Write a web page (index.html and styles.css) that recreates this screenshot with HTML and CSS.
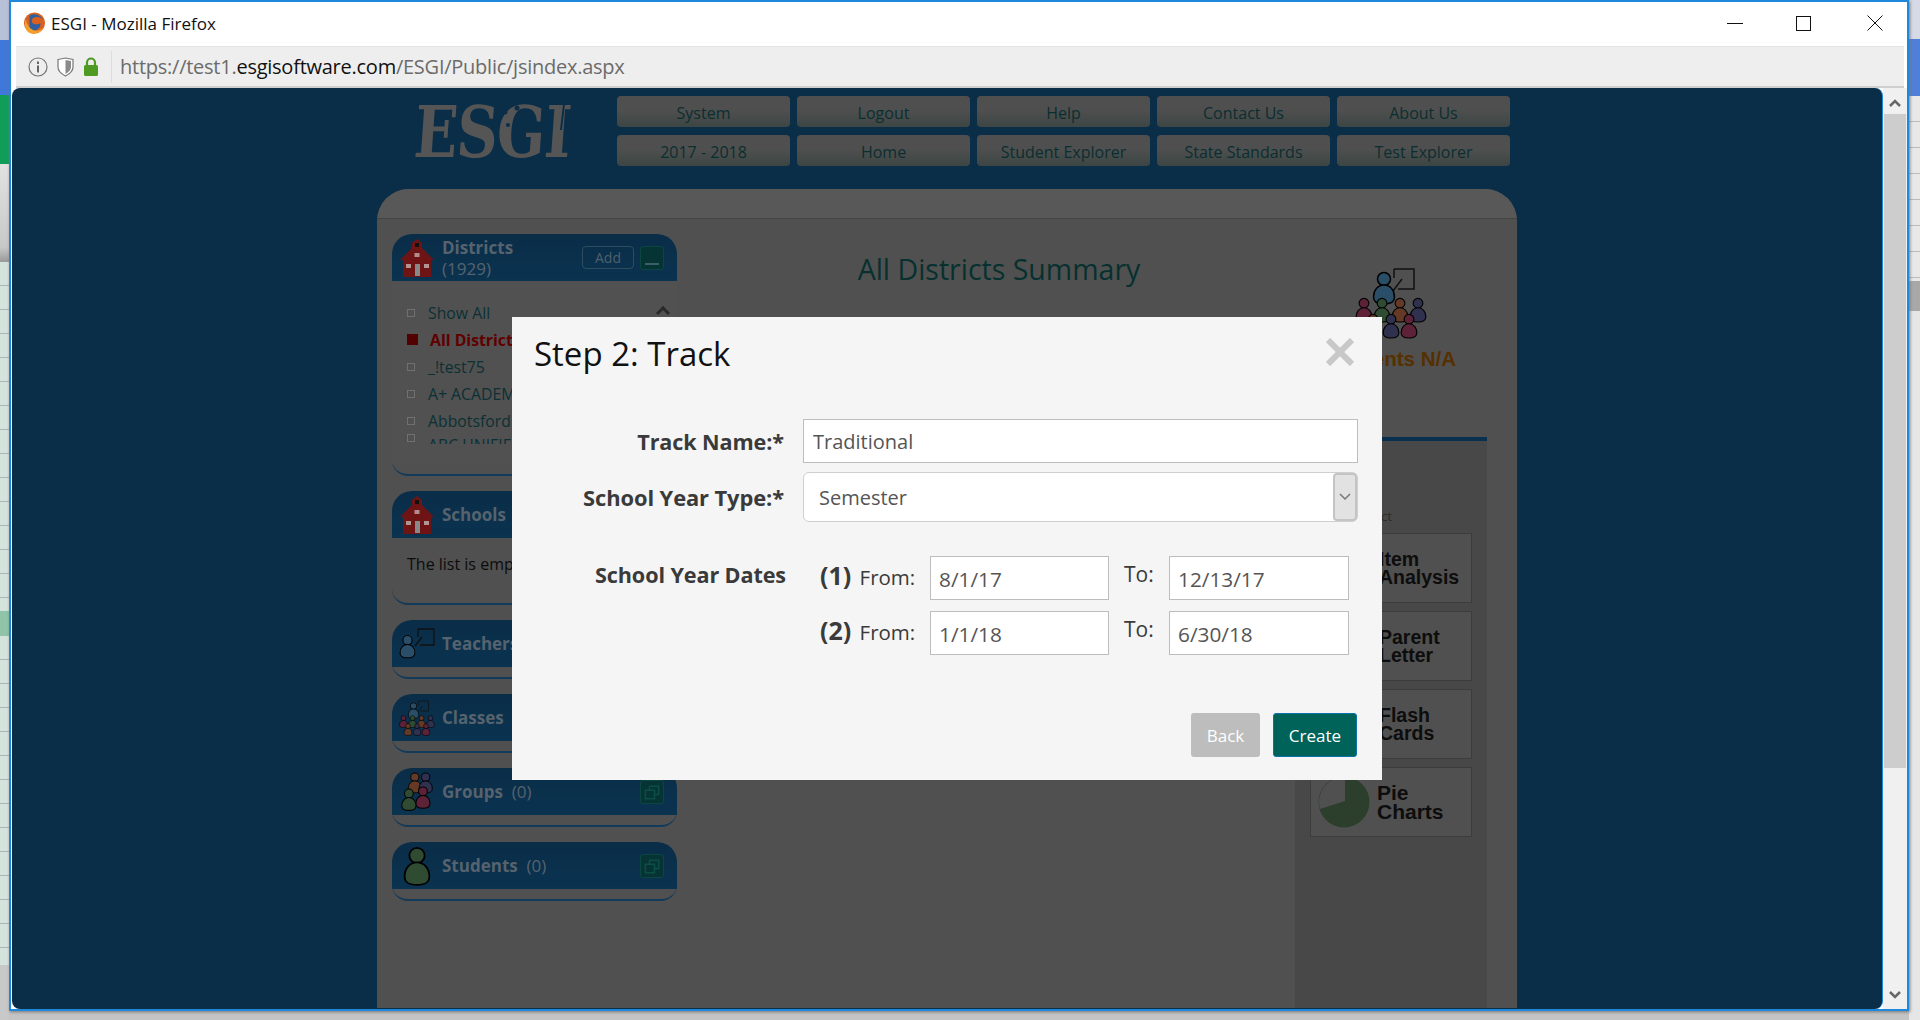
FILE: index.html
```html
<!DOCTYPE html>
<html lang="en">
<head>
    <meta charset="UTF-8">
    <title>ESGI - Mozilla Firefox</title>
    <link rel="stylesheet" href="styles.css">
</head>
<body>

<svg class="defs" width="0" height="0">
    <symbol id="school" viewBox="0 0 36 38">
        <path d="M18 0l5 4v5l12 12h-3v17H4V21H1L13 9V4z" fill="#6f1414"/>
        <rect x="16" y="4" width="4" height="4" fill="#111"/>
        <rect x="15.500" y="14" width="5" height="4" fill="#ddd" opacity=".6"/>
        <rect x="16" y="25" width="5" height="12" fill="#888"/>
        <rect x="7" y="25" width="5" height="4" fill="#ccc" opacity=".7"/>
        <rect x="25" y="25" width="5" height="4" fill="#ccc" opacity=".7"/>
    </symbol>
    <symbol id="person" viewBox="0 0 24 34">
        <circle cx="12" cy="8" r="6.500" stroke="#000" stroke-width="1.500"/>
        <path d="M12 14c6 0 10.500 5 10.500 12 0 5-3 7-10.500 7S1.500 31 1.500 26C1.500 19 6 14 12 14z" stroke="#000" stroke-width="1.500"/>
    </symbol>
    <symbol id="teacher" viewBox="0 0 36 32">
        <use href="#person" x="0" y="6" width="17" height="25" fill="#2a4d68"/>
        <path d="M19 1h16v16H21M23 9l-7 9" fill="none" stroke="#111" stroke-width="1.300"/>
        <path d="M19 1v8" fill="none" stroke="#111" stroke-width="1.300"/>
    </symbol>
    <symbol id="class" viewBox="0 0 72 72">
        <path d="M39 2h20v20H43M47 12l-9 12" fill="none" stroke="#111" stroke-width="1.500"/>
        <path d="M39 2v9" fill="none" stroke="#111" stroke-width="1.500"/>
        <use href="#person" x="17" y="4" width="24" height="34" fill="#2a4d68"/>
        <use href="#person" x="0" y="30" width="18" height="26" fill="#5e2238"/>
        <use href="#person" x="18" y="30" width="18" height="26" fill="#2f4c33"/>
        <use href="#person" x="36" y="30" width="18" height="26" fill="#643a26"/>
        <use href="#person" x="54" y="30" width="18" height="26" fill="#30304f"/>
        <use href="#person" x="9" y="46" width="18" height="26" fill="#643a26"/>
        <use href="#person" x="27" y="46" width="18" height="26" fill="#30304f"/>
        <use href="#person" x="45" y="46" width="18" height="26" fill="#5e2238"/>
    </symbol>
    <symbol id="group" viewBox="0 0 32 37">
        <use href="#person" x="7" y="0" width="14" height="20" fill="#643a26"/>
        <use href="#person" x="17" y="0" width="14" height="20" fill="#30304f"/>
        <use href="#person" x="14" y="12" width="15" height="23" fill="#5e2238"/>
        <use href="#person" x="1" y="14" width="15" height="23" fill="#2f4c33"/>
    </symbol>
    <symbol id="copy" viewBox="0 0 24 24">
        <path d="M9 5h11v10h-5M4 10h11v10H4zM9 10V5" fill="none" stroke="#0c4d48" stroke-width="1.800"/>
    </symbol>
</svg>

<div class="desktop-left">
    <div class="dl-top"></div>
    <div class="dl-blue"></div>
    <div class="dl-green"></div>
    <div class="dl-gray"></div>
    <div class="dl-rows dl-rows-a"></div>
    <div class="dl-mark"></div>
    <div class="dl-rows dl-rows-b"></div>
</div>
<div class="desktop-right">
    <div class="dr-top"></div>
    <div class="dr-blue"></div>
    <div class="dr-lines"></div>
    <div class="dr-mark"></div>
</div>

<div class="window">
    <div class="titlebar">
        <svg class="ff-logo" viewBox="0 0 24 24" width="23" height="24">
            <circle cx="12" cy="12" r="11" fill="#d9601f"/>
            <path d="M7 4a10 10 0 0 1 14 5c-2-3-5-4-8-3-3 0-5 3-3 6 2 2 6 2 8 0 1 4-3 8-7 8-2 0-4-1-5-2 2 0 0-10 1-14z" fill="#2f5f9e"/>
            <path d="M3 8c-2 5-1 11 3 14 5 3 13 1 16-6-3 4-8 5-12 3-4-2-6-6-7-11z" fill="#f3a02a"/>
        </svg>
        <span class="win-title">ESGI - Mozilla Firefox</span>
        <div class="win-controls">
            <span class="ctl-min"></span>
            <span class="ctl-max"></span>
            <svg class="ctl-close" viewBox="0 0 16 16" width="16" height="16"><path d="M.5.5l15 15M15.500.5l-15 15" stroke="#111" stroke-width="1"/></svg>
        </div>
    </div>
    <div class="urlbar">
        <svg class="url-ic" viewBox="0 0 20 20" width="20" height="20"><circle cx="10" cy="10" r="9" fill="none" stroke="#777" stroke-width="1.200"/><rect x="9" y="8.500" width="2" height="7" fill="#666"/><rect x="9" y="4.500" width="2" height="2.500" fill="#666"/></svg>
        <svg class="url-ic" viewBox="0 0 19 20" width="19" height="20"><path d="M2 2.500L9.500 1 17 2.500V10c0 4-3.500 7-7.500 9C5.500 17 2 14 2 10z" fill="#fff" stroke="#777" stroke-width="1.200"/><path d="M9.500 3l5.500 1v6c0 3-2.500 5-5.500 7z" fill="#8a8a8a"/></svg>
        <svg class="url-ic" viewBox="0 0 16 19" width="16" height="19"><path d="M4 8V5.500a4 4 0 0 1 8 0V8" fill="none" stroke="#4f9a22" stroke-width="2.200"/><rect x="1" y="8" width="14" height="11" rx="1.500" fill="#4f9a22"/></svg>
        <span class="url-text">https://test1.<b>esgisoftware.com</b>/ESGI/Public/jsindex.aspx</span>
    </div>

    <div class="content">
        <div class="viewport">
            <div class="site">
                <div class="site-head">
                    <div class="logo-wrap">
                        <div class="logo">ESGI</div>
                        <svg class="logo-marks" viewBox="0 0 240 60" width="240" height="60">
                            <circle cx="128" cy="16" r="2.500" fill="#0a2d48"/>
                            <circle cx="140" cy="12" r="2.500" fill="#0a2d48"/>
                            <circle cx="131" cy="29" r="2" fill="#0a2d48"/>
                            <path d="M187 8l-3 26" stroke="#0a2d48" stroke-width="2"/>
                        </svg>
                    </div>
                    <div class="nav">
                        <a class="nav-btn">System</a>
                        <a class="nav-btn">Logout</a>
                        <a class="nav-btn">Help</a>
                        <a class="nav-btn">Contact Us</a>
                        <a class="nav-btn">About Us</a>
                        <a class="nav-btn">2017 - 2018</a>
                        <a class="nav-btn">Home</a>
                        <a class="nav-btn">Student Explorer</a>
                        <a class="nav-btn">State Standards</a>
                        <a class="nav-btn">Test Explorer</a>
                    </div>
                </div>

                <div class="panel">
                    <div class="panel-top"></div>
                    <div class="panel-body">
                        <div class="sidebar">
                            <div class="box">
                                <div class="box-head">
                                    <svg class="box-ic"><use href="#school"/></svg>
                                    <div class="box-title"><b>Districts</b><br>(1929)</div>
                                    <span class="add-btn">Add</span>
                                    <span class="tool-btn"><i class="dash"></i></span>
                                </div>
                                <div class="box-list">
                                    <span class="scroll-up"></span>
                                    <div class="li"><i></i>Show All</div>
                                    <div class="li active"><i></i>All Districts</div>
                                    <div class="li"><i></i>_!test75</div>
                                    <div class="li"><i></i>A+ ACADEMY</div>
                                    <div class="li"><i></i>Abbotsford</div>
                                    <div class="li li-cut"><i></i>ABC UNIFIED</div>
                                </div>
                            </div>
                            <div class="box">
                                <div class="box-head">
                                    <svg class="box-ic"><use href="#school"/></svg>
                                    <div class="box-title"><b>Schools</b></div>
                                </div>
                                <div class="box-empty">The list is empty</div>
                            </div>
                            <div class="box">
                                <div class="box-head">
                                    <svg class="box-ic"><use href="#teacher"/></svg>
                                    <div class="box-title"><b>Teachers</b></div>
                                </div>
                            </div>
                            <div class="box">
                                <div class="box-head">
                                    <svg class="box-ic"><use href="#class"/></svg>
                                    <div class="box-title"><b>Classes</b></div>
                                </div>
                            </div>
                            <div class="box">
                                <div class="box-head">
                                    <svg class="box-ic"><use href="#group"/></svg>
                                    <div class="box-title"><b>Groups</b>&nbsp; (0)</div>
                                    <span class="tool-btn"><svg width="20" height="20"><use href="#copy"/></svg></span>
                                </div>
                            </div>
                            <div class="box">
                                <div class="box-head">
                                    <svg class="box-ic"><use href="#person" fill="#2f4c33"/></svg>
                                    <div class="box-title"><b>Students</b>&nbsp; (0)</div>
                                    <span class="tool-btn"><svg width="20" height="20"><use href="#copy"/></svg></span>
                                </div>
                            </div>
                        </div>

                        <div class="summary">
                            <h2 class="summary-title">All Districts Summary</h2>
                            <div class="stat">
                                <svg class="stat-ic"><use href="#class"/></svg>
                                <div class="stat-text">Students N/A</div>
                            </div>
                            <div class="reports">
                                <div class="reports-note">Select</div>
                                <div class="card"><span>Item<br>Analysis</span></div>
                                <div class="card"><span>Parent<br>Letter</span></div>
                                <div class="card"><span>Flash<br>Cards</span></div>
                                <div class="card card-pie">
                                    <svg viewBox="0 0 52 52" width="52" height="52">
                                        <circle cx="26" cy="26" r="25.500" fill="#2c3f2c"/>
                                        <path d="M27 1v24L2 33A25 25 0 0 1 27 1z" fill="#505050"/>
                                    </svg>
                                    <span>Pie<br>Charts</span>
                                </div>
                            </div>
                        </div>
                    </div>
                </div>
            </div>

            <div class="modal">
                <div class="modal-head">
                    <h3 class="modal-title">Step 2: Track</h3>
                    <svg class="modal-close" viewBox="0 0 28 28" width="28" height="28"><path d="M2 2l24 24M26 2L2 26" stroke="#c8c8c8" stroke-width="6"/></svg>
                </div>
                <div class="form-row">
                    <label class="form-label">Track Name:*</label>
                    <input class="text-input" type="text" value="Traditional">
                </div>
                <div class="form-row form-row-select">
                    <label class="form-label">School Year Type:*</label>
                    <div class="select">
                        <span>Semester</span>
                        <span class="select-arrow">
                            <svg viewBox="0 0 12 8" width="12" height="8"><path d="M1 1l5 5 5-5" fill="none" stroke="#777" stroke-width="1.500"/></svg>
                        </span>
                    </div>
                </div>
                <div class="dates">
                    <div class="form-label dates-label">School Year Dates</div>
                    <div class="dates-grid">
                        <div class="dates-n"><b>(1)</b> From:</div>
                        <input class="date-input" type="text" value="8/1/17">
                        <div class="dates-to">To:</div>
                        <input class="date-input" type="text" value="12/13/17">
                        <div class="dates-n"><b>(2)</b> From:</div>
                        <input class="date-input" type="text" value="1/1/18">
                        <div class="dates-to">To:</div>
                        <input class="date-input" type="text" value="6/30/18">
                    </div>
                </div>
                <div class="modal-foot">
                    <button class="btn btn-back">Back</button>
                    <button class="btn btn-create">Create</button>
                </div>
            </div>
        </div>

        <div class="scrollbar">
            <svg viewBox="0 0 12 8" width="12" height="8"><path d="M1 7l5-5 5 5" fill="none" stroke="#666" stroke-width="2.500"/></svg>
            <div class="scroll-thumb"></div>
            <div class="scroll-rest"></div>
            <svg viewBox="0 0 12 8" width="12" height="8"><path d="M1 1l5 5 5-5" fill="none" stroke="#666" stroke-width="2.500"/></svg>
        </div>
    </div>
</div>

</body>
</html>
```

FILE: styles.css
```css
html, body {
    margin: 0;
    height: 100%;
    overflow: hidden;
}
body {
    background-color: #c4c4c4;
    font-family: "Open Sans", "Noto Sans", sans-serif;
}
.defs {
    position: absolute;
}

/* desktop showing behind the firefox window */
.desktop-left {
    position: absolute;
    left: 0;
    top: 0;
    width: 9px;
    height: 1020px;
    display: flex;
    flex-direction: column;
    background-color: #c8c8c8;
}
.dl-top {
    height: 40px;
    background-color: #b8c0d8;
}
.dl-blue {
    height: 55px;
    background-color: #3f78d8;
}
.dl-green {
    height: 69px;
    background-color: #0f9d58;
}
.dl-gray {
    height: 98px;
    background: linear-gradient(#e2e2e2, #c8c8c8 85%, #999);
}
.dl-rows {
    background: repeating-linear-gradient(#d5e3dd 0, #d5e3dd 23px, #a9b5b0 23px, #a9b5b0 24px);
}
.dl-rows-a {
    height: 349px;
}
.dl-mark {
    height: 25px;
    background-color: #8fc4a8;
}
.dl-rows-b {
    height: 329px;
}
.desktop-right {
    position: absolute;
    right: 0;
    top: 0;
    width: 11px;
    height: 1020px;
    background-color: #e6e6e6;
}
.dr-top {
    height: 39px;
    background-color: #d6d9e6;
}
.dr-blue {
    height: 57px;
    background-color: #4f7fd8;
}
.dr-lines {
    height: 185px;
    background: repeating-linear-gradient(#e8e8e8 0, #e8e8e8 25px, #bbb 25px, #bbb 26px);
}
.dr-mark {
    height: 30px;
    background-color: #a8a8a8;
}

.window {
    position: absolute;
    left: 9px;
    top: 0;
    width: 1900px;
    height: 1011px;
    background-color: #fff;
    border: 2px solid #1e88dc;
    box-sizing: border-box;
    display: flex;
    flex-direction: column;
    box-shadow: 1px 1px 3px #777;
}
.titlebar {
    height: 44px;
    display: flex;
    align-items: center;
    padding: 0 0 2px 12px;
    box-sizing: border-box;
    flex-shrink: 0;
}
.ff-logo {
    margin-right: 5px;
}
.win-title {
    font-size: 17px;
    color: #111;
}
.win-controls {
    margin-left: auto;
    display: flex;
    align-items: center;
    gap: 53px;
    padding-right: 24px;
}
.ctl-min {
    width: 16px;
    height: 1px;
    background-color: #111;
}
.ctl-max {
    width: 13px;
    height: 13px;
    border: 1px solid #111;
}
.ctl-close {
    margin-left: 3px;
}
.urlbar {
    height: 42px;
    margin: 0 3px 0 5px;
    background-color: #eeeeee;
    border-top: 1px solid #e4e4e4;
    border-bottom: 2px solid #cfcfcf;
    box-sizing: border-box;
    display: flex;
    align-items: center;
    gap: 8px;
    padding-left: 12px;
    flex-shrink: 0;
}
.url-text {
    margin-left: 4px;
    padding-left: 8px;
    border-left: 1px solid #ddd;
    font-size: 20px;
    line-height: 32px;
    color: #6b6b6b;
    letter-spacing: -.25px;
}
.url-text b {
    font-weight: 400;
    color: #111;
}

.content {
    flex: 1;
    display: flex;
    min-height: 0;
    padding-left: 1px;
}
.viewport {
    flex: 1;
    position: relative;
    overflow: hidden;
    background-color: #0a2d48;
    border-radius: 8px;
    border-right: 1px solid #1e88dc;
}
.scrollbar {
    width: 24px;
    background-color: #f0f0f0;
    display: flex;
    flex-direction: column;
    align-items: center;
    padding-top: 11px;
    padding-bottom: 10px;
    box-sizing: border-box;
}
.scroll-thumb {
    width: 22px;
    height: 654px;
    margin-top: 7px;
    background-color: #cdcdcd;
}
.scroll-rest {
    flex: 1;
}

.site {
    width: 1140px;
    margin: 0 auto;
}
.site-head {
    height: 101px;
    display: flex;
    padding-top: 8px;
    box-sizing: border-box;
}
.logo-wrap {
    position: relative;
    width: 240px;
}
.logo {
    padding-left: 40px;
    font-family: "DejaVu Serif", serif;
    font-weight: 700;
    font-size: 57px;
    line-height: 57px;
    letter-spacing: -1px;
    color: #555;
    transform: skewX(-4deg) scaleY(1.25);
    transform-origin: 0 0;
}
.logo-marks {
    position: absolute;
    left: 0;
    top: 0;
}
.nav {
    display: grid;
    grid-template-columns: repeat(5, 173px);
    grid-auto-rows: 31px;
    gap: 8px 7px;
}
.nav-btn {
    display: block;
    border-radius: 4px;
    background: linear-gradient(#4f4f4f 45%, #3c4644);
    color: #0b2e30;
    font-size: 16px;
    line-height: 34px;
    text-align: center;
}

.panel {
    height: 819px;
    overflow: hidden;
    background-color: #505050;
    border-radius: 32px 32px 0 0;
}
.panel-top {
    height: 29px;
    background-color: #585858;
    border-bottom: 1px solid #444;
    border-radius: 32px 32px 0 0;
}
.panel-body {
    display: flex;
    padding: 15px 0 0 15px;
}

.sidebar {
    width: 285px;
    display: flex;
    flex-direction: column;
    gap: 15px;
}
.box {
    background-color: #505050;
    border-bottom: 2px solid #123a5a;
    border-radius: 22px 22px 16px 16px;
    padding-bottom: 10px;
}
.box-head {
    height: 47px;
    display: flex;
    align-items: center;
    padding: 0 13px 0 7px;
    background: linear-gradient(#0a2d48, #0a3350);
    border-radius: 20px 20px 0 0;
    color: #56636e;
}
.box-ic {
    width: 36px;
    height: 40px;
    margin-right: 7px;
    flex-shrink: 0;
}
.box-title {
    font-size: 17px;
    line-height: 21px;
    flex: 1;
}
.add-btn {
    width: 50px;
    height: 21px;
    margin-right: 6px;
    border: 1px solid #2f4c5c;
    border-radius: 4px;
    font-size: 14px;
    line-height: 21px;
    text-align: center;
    color: #4f5f6c;
}
.tool-btn {
    width: 24px;
    height: 24px;
    display: flex;
    align-items: center;
    justify-content: center;
    background-color: #063434;
    border: 1px solid #0c4642;
    border-radius: 3px;
    box-sizing: border-box;
}
.dash {
    width: 14px;
    height: 2px;
    margin-top: 12px;
    background-color: #3a5f68;
}
.box-list {
    position: relative;
    height: 183px;
    padding-top: 18px;
    box-sizing: border-box;
    background-color: #515151;
}
.scroll-up {
    position: absolute;
    right: 9px;
    top: 27px;
    width: 7px;
    height: 7px;
    border-left: 3px solid #2a2a2a;
    border-top: 3px solid #2a2a2a;
    transform: rotate(45deg);
}
.li {
    height: 27px;
    display: flex;
    align-items: center;
    padding-left: 15px;
    font-size: 15.800px;
    color: #0c3034;
}
.li-cut {
    height: 10px;
    overflow: hidden;
    align-items: flex-start;
}
.li i {
    width: 6px;
    height: 6px;
    margin-right: 13px;
    border: 1px solid #707070;
}
.li.active {
    font-weight: 700;
    color: #600000;
}
.li.active i {
    width: 11px;
    height: 11px;
    margin-right: 12px;
    border: none;
    background-color: #520000;
}
.box-empty {
    height: 55px;
    padding: 15px 15px 0;
    box-sizing: border-box;
    font-size: 16px;
    color: #0c0c0c;
}

.summary {
    position: relative;
    flex: 1;
}
.summary-title {
    margin: 16px 0 0;
    width: 644px;
    text-align: center;
    font-size: 28.500px;
    font-weight: 400;
    color: #07302f;
}
.stat {
    position: absolute;
    right: 61px;
    top: 33px;
    text-align: center;
}
.stat-ic {
    display: block;
    width: 72px;
    height: 72px;
    margin: 0 auto 8px auto;
    transform: translateX(-1px);
}
.stat-text {
    font-family: "Liberation Sans", sans-serif;
    font-size: 20.500px;
    font-weight: 700;
    color: #563000;
}
.reports {
    position: absolute;
    left: 618px;
    top: 203px;
    width: 192px;
    height: 620px;
    background-color: #484848;
    border-top: 4px solid #0a3050;
    box-sizing: border-box;
    padding: 0 15px;
}
.reports-note {
    height: 92px;
    padding: 66px 0 0 46px;
    box-sizing: border-box;
    font-size: 13px;
    color: #2c2c2c;
}
.card {
    height: 70px;
    margin-bottom: 8px;
    width: 162px;
    border: 1px solid #3b3b40;
    background-color: #505050;
    box-sizing: border-box;
    display: flex;
    align-items: center;
    padding-left: 68px;
    font-family: "Liberation Sans", sans-serif;
    font-size: 19.500px;
    line-height: 18px;
    font-weight: 700;
    color: #0d0d0d;
}
.card-pie {
    padding-left: 7px;
    gap: 7px;
    font-size: 21px;
    line-height: 19px;
}

/* Step 2 dialog sits over the dimmed page */
.modal {
    position: absolute;
    left: 500px;
    top: 229px;
    width: 870px;
    height: 463px;
    background-color: #f5f5f5;
    padding: 0 24px 0 22px;
    box-sizing: border-box;
    font-size: 20px;
    color: #3a3a3a;
}
.modal-head {
    height: 102px;
    display: flex;
    justify-content: space-between;
    align-items: flex-start;
}
.modal-title {
    margin: 15px 0 0;
    font-size: 33px;
    line-height: 44px;
    font-weight: 400;
    color: #111;
}
.modal-close {
    margin: 21px 4px 0 0;
}
.form-row {
    display: flex;
    align-items: center;
    gap: 19px;
}
.form-row-select {
    margin-top: 9px;
}
.form-label {
    width: 250px;
    text-align: right;
    font-weight: 700;
    font-size: 21.600px;
    letter-spacing: -.1px;
    white-space: nowrap;
    flex-shrink: 0;
    color: #3a3a3a;
}
.form-row-select .form-label {
    font-size: 21.900px;
}
.text-input {
    width: 556px;
    height: 44px;
    padding: 0 9px;
    border: 1px solid #bdbdbd;
    box-sizing: border-box;
    font-family: inherit;
    font-size: 20px;
    color: #555;
    background-color: #fff;
}
.select {
    width: 556px;
    height: 50px;
    display: flex;
    align-items: center;
    justify-content: space-between;
    padding-left: 15px;
    border: 1px solid #cfcfcf;
    border-radius: 6px;
    box-sizing: border-box;
    background-color: #fff;
    color: #555;
}
.select-arrow {
    width: 24px;
    height: 48px;
    display: flex;
    align-items: center;
    justify-content: center;
    background-color: #e2e2e2;
    border: 2px solid #c4c4c4;
    border-radius: 4px;
    box-sizing: border-box;
}
.dates {
    display: flex;
    margin-top: 34px;
}
.dates-label {
    width: 252px;
    line-height: 38px;
}
.dates-grid {
    display: grid;
    grid-template-columns: 144px 179px 60px 180px;
    grid-auto-rows: 44px;
    row-gap: 11px;
}
.dates-n {
    padding-left: 34px;
    white-space: nowrap;
    line-height: 38px;
    font-size: 20.500px;
}
.dates-n b {
    font-size: 25px;
    margin-right: 3px;
}
.dates-to {
    padding-left: 15px;
    line-height: 37px;
    font-size: 21px;
}
.date-input {
    width: 100%;
    height: 44px;
    padding: 1px 8px 0;
    border: 1px solid #bdbdbd;
    box-sizing: border-box;
    font-family: inherit;
    font-size: 20.800px;
    color: #555;
    background-color: #fff;
}
.modal-foot {
    display: flex;
    justify-content: flex-end;
    gap: 13px;
    margin: 58px 1px 0 0;
}
.btn {
    height: 44px;
    border-radius: 3px;
    font-family: inherit;
    font-size: 17px;
    color: #fff;
    border: 1px solid transparent;
}
.btn-back {
    width: 69px;
    background-color: #bdbdbd;
}
.btn-create {
    width: 84px;
    background-color: #00635a;
    border-color: #0a72a8;
}
```
